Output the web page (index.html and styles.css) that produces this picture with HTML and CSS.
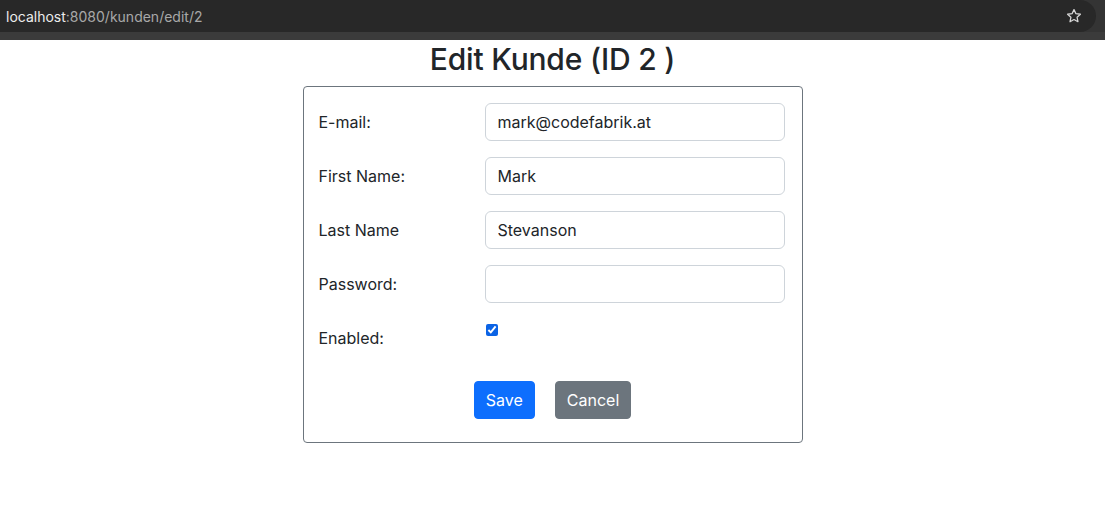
FILE: index.html
```html
<!DOCTYPE html>
<html lang="de">
<head>
<meta charset="utf-8">
<title>Edit Kunde</title>
<link rel="stylesheet" href="styles.css">
</head>
<body>
<header class="chrome">
  <div class="omnibox">
    <span class="url"><span class="host">localhost</span>:8080/kunden/edit/2</span>
    <svg class="star" width="16" height="16" viewBox="0 0 16 16" aria-hidden="true">
      <path d="M8 1.6l1.95 4.1 4.45.55-3.3 3.05.85 4.4L8 11.55 4.05 13.7l.85-4.4L1.6 6.25l4.45-.55z" fill="none" stroke="#d6d6d6" stroke-width="1.3" stroke-linejoin="round"/>
    </svg>
  </div>
  <div class="toolbar-band"></div>
</header>
<main class="page">
  <h2 class="title">Edit Kunde (ID 2 )</h2>
  <form class="card">
    <div class="row">
      <label class="label" for="email">E-mail:</label>
      <input class="input" id="email" type="text" value="mark@codefabrik.at">
    </div>
    <div class="row">
      <label class="label" for="first">First Name:</label>
      <input class="input" id="first" type="text" value="Mark">
    </div>
    <div class="row">
      <label class="label" for="last">Last Name</label>
      <input class="input" id="last" type="text" value="Stevanson">
    </div>
    <div class="row">
      <label class="label" for="pw">Password:</label>
      <input class="input" id="pw" type="password" value="">
    </div>
    <div class="row">
      <label class="label" for="enabled">Enabled:</label>
      <div class="check-cell"><input class="check" id="enabled" type="checkbox" checked></div>
    </div>
    <div class="actions">
      <button type="button" class="btn btn-primary">Save</button>
      <button type="button" class="btn btn-secondary">Cancel</button>
    </div>
  </form>
</main>
</body>
</html>
```
FILE: styles.css
```css
* { box-sizing: border-box; }
html, body { margin: 0; padding: 0; }
body {
  background: #fff;
  color: #212529;
  font-family: Inter, "Liberation Sans", Arial, sans-serif;
  font-size: 16px;
  line-height: 1.5;
}
.chrome {
  background: #343434;
}
.omnibox {
  height: 32px;
  width: 1096px;
  background: #282828;
  border-radius: 0 16px 16px 0;
  display: flex;
  align-items: center;
  justify-content: space-between;
  padding: 0 14px 0 6px;
}
.url {
  font-family: Inter, "Liberation Sans", Arial, sans-serif;
  font-size: 14px;
  color: #a8a8a8;
}
.host { color: #ececec; }
.star { display: block; }
.toolbar-band {
  height: 8px;
  background: #3b3b3b;
}
.page {
  padding-top: 1px;
  display: flex;
  flex-direction: column;
  align-items: center;
}
.title {
  margin: 0 0 9px;
  font-size: 30px;
  font-weight: 500;
  line-height: 36px;
  letter-spacing: -0.2px;
  color: #212529;
}
.card {
  width: 500px;
  border: 1px solid #6c757d;
  border-radius: 4px;
  padding: 16px 17px 23px 15px;
  display: flex;
  flex-direction: column;
  gap: 16px;
}
.row {
  display: grid;
  grid-template-columns: 166px 300px;
  align-items: center;
  min-height: 38px;
}
.label { color: #212529; }
.input {
  height: 38px;
  width: 300px;
  padding: 6px 12px;
  font: inherit;
  color: #212529;
  border: 1px solid #ced4da;
  border-radius: 6px;
  background: #fff;
  outline: none;
}
.check-cell {
  align-self: start;
  padding-top: 5px;
  height: 38px;
}
.check {
  margin: 0 0 0 1px;
  width: 12px;
  height: 12px;
  accent-color: #0b63e5;
  display: block;
}
.actions {
  margin-top: 8px;
  padding-left: 2px;
  display: flex;
  justify-content: center;
  gap: 20px;
}
.btn {
  font: inherit;
  line-height: 24px;
  padding: 6px 11px;
  border: 1px solid transparent;
  border-radius: 4px;
  color: #fff;
  cursor: pointer;
}
.btn-primary { background: #0d6efd; border-color: #0d6efd; }
.btn-secondary { background: #6c757d; border-color: #6c757d; }
```
